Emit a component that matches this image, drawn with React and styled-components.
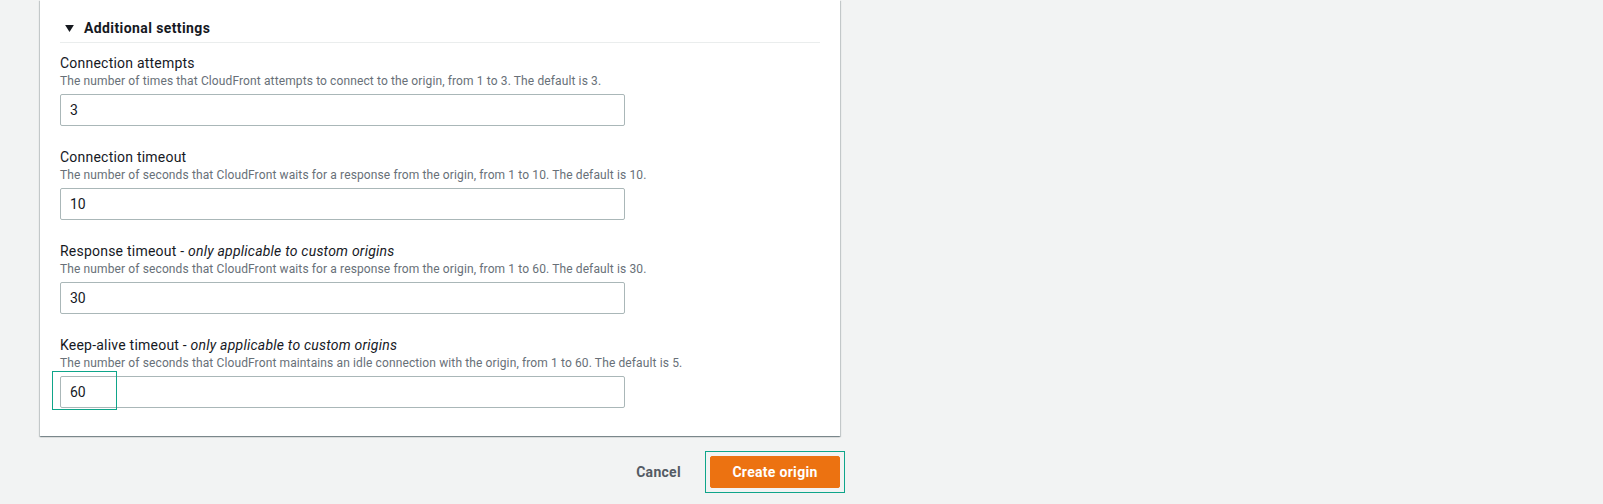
import React from "react";
import styled, { createGlobalStyle } from "styled-components";

const GlobalStyle = createGlobalStyle`
  html, body {
    margin: 0;
    padding: 0;
    background: #f2f3f3;
  }
  body {
    font-family: Roboto, "Noto Sans", Arial, sans-serif;
    color: #16191f;
  }
`;

const fields = [
  {
    label: "Connection attempts",
    desc: "The number of times that CloudFront attempts to connect to the origin, from 1 to 3. The default is 3.",
    value: "3",
  },
  {
    label: "Connection timeout",
    desc: "The number of seconds that CloudFront waits for a response from the origin, from 1 to 10. The default is 10.",
    value: "10",
  },
  {
    label: "Response timeout",
    note: "only applicable to custom origins",
    desc: "The number of seconds that CloudFront waits for a response from the origin, from 1 to 60. The default is 30.",
    value: "30",
  },
  {
    label: "Keep-alive timeout",
    note: "only applicable to custom origins",
    desc: "The number of seconds that CloudFront maintains an idle connection with the origin, from 1 to 60. The default is 5.",
    value: "60",
    focused: true,
  },
];

const App = () => (
  <Page>
    <GlobalStyle />
    <Card>
      <Header>
        <Caret viewBox="0 0 10 8">
          <path d="M0 0h10L5 8z" fill="#16191f" />
        </Caret>
        Additional settings
      </Header>
      <Body>
        {fields.map((f) => (
          <Field key={f.label}>
            <Label>
              {f.label}
              {f.note && (
                <>
                  {" - "}
                  <em>{f.note}</em>
                </>
              )}
            </Label>
            <Description>{f.desc}</Description>
            <InputWrap>
              <Input defaultValue={f.value} readOnly />
              {f.focused && <FocusRing />}
            </InputWrap>
          </Field>
        ))}
      </Body>
    </Card>
    <Footer>
      <LinkButton type="button">Cancel</LinkButton>
      <PrimaryButton type="button">Create origin</PrimaryButton>
    </Footer>
  </Page>
);

const Page = styled.div`
  width: 800px;
  margin-left: 40px;
  min-height: 504px;
`;

const Card = styled.div`
  background: #fff;
  box-shadow: 0 1px 1px 0 rgba(0, 28, 36, 0.3), 1px 1px 1px 0 rgba(0, 28, 36, 0.15),
    -1px 1px 1px 0 rgba(0, 28, 36, 0.15);
  padding: 18px 20px 28px;
`;

const Header = styled.div`
  display: flex;
  align-items: center;
  gap: 10px;
  height: 20px;
  padding-bottom: 4px;
  border-bottom: 1px solid #eaeded;
  font-size: 14px;
  font-weight: 700;
  line-height: 20px;
  letter-spacing: 0.4px;
`;

const Caret = styled.svg`
  width: 9px;
  height: 7px;
  margin-left: 5px;
`;

const Body = styled.div`
  display: flex;
  flex-direction: column;
  gap: 21px;
  padding-top: 10px;
`;

const Field = styled.div`
  display: flex;
  flex-direction: column;
`;

const Label = styled.div`
  font-size: 14px;
  line-height: 20px;
  letter-spacing: 0.22px;
  color: #16191f;
  em {
    font-style: italic;
  }
`;

const Description = styled.div`
  font-size: 12px;
  line-height: 16px;
  letter-spacing: 0.12px;
  color: #687078;
  margin-bottom: 5px;
`;

const InputWrap = styled.div`
  position: relative;
  width: 565px;
`;

const Input = styled.input`
  box-sizing: border-box;
  width: 100%;
  height: 32px;
  padding: 0 9px;
  border: 1px solid #aab7b8;
  border-radius: 2px;
  font-family: inherit;
  font-size: 14px;
  color: #16191f;
  background: #fff;
  outline: none;
`;

const FocusRing = styled.div`
  position: absolute;
  left: -8px;
  top: -5px;
  width: 65px;
  height: 39px;
  border: 1px solid #0fa58a;
  box-sizing: border-box;
  pointer-events: none;
`;

const Footer = styled.div`
  display: flex;
  justify-content: flex-end;
  align-items: center;
  gap: 9px;
  padding-top: 20px;
`;

const LinkButton = styled.button`
  background: none;
  border: none;
  padding: 4px 20px;
  font-family: inherit;
  font-size: 14px;
  font-weight: 700;
  letter-spacing: 0.3px;
  color: #545b64;
`;

const PrimaryButton = styled.button`
  position: relative;
  background: #ec7211;
  border: 1px solid #ec7211;
  border-radius: 2px;
  height: 32px;
  width: 130px;
  font-family: inherit;
  font-size: 14px;
  font-weight: 700;
  letter-spacing: 0.3px;
  color: #fff;
  outline: none;
  &::after {
    content: "";
    position: absolute;
    inset: -6px;
    border: 1px solid #0fa58a;
  }
`;

export default App;
